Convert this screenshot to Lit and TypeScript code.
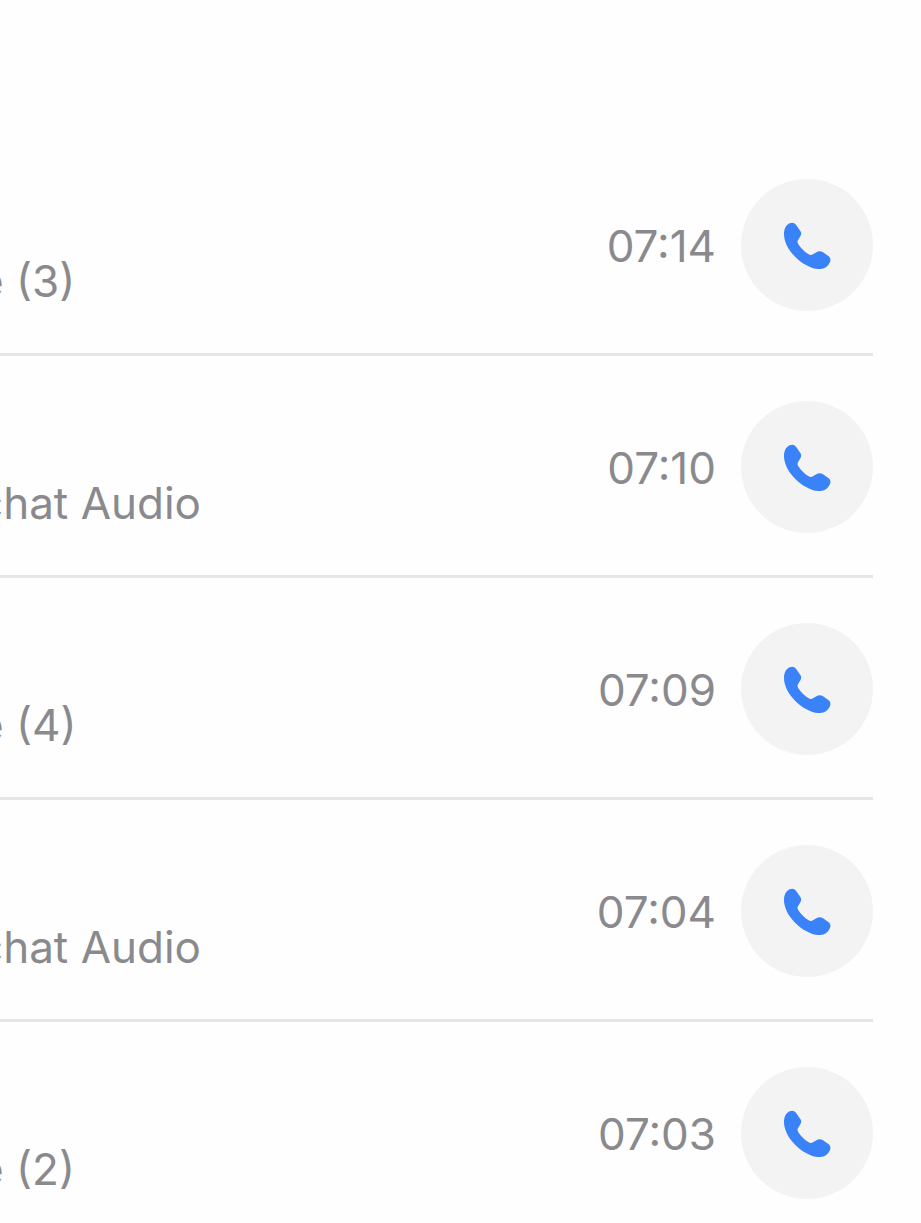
import { LitElement, html, css } from "lit";
import { customElement, property } from "lit/decorators.js";

interface Call {
  source: string;
  time: string;
}

const calls: Call[] = [
  { source: "e (3)", time: "07:14" },
  { source: "chat Audio", time: "07:10" },
  { source: "e (4)", time: "07:09" },
  { source: "chat Audio", time: "07:04" },
  { source: "e (2)", time: "07:03" },
];

@customElement("call-row")
class CallRow extends LitElement {
  @property({ attribute: false }) call!: Call;

  static styles = css`
    :host {
      display: block;
    }
    .row {
      display: flex;
      align-items: center;
      gap: 25px;
      padding: 45px 0 42px;
      border-bottom: 3px solid #e5e5ea;
      font-size: 44px;
      line-height: 56px;
      color: #8a8a8e;
    }
    .source {
      flex: 1;
      min-width: 0;
      margin-left: -22px;
      padding-top: 72px;
      white-space: nowrap;
    }
    .time {
      padding-top: 2px;
    }
    .dial {
      display: grid;
      place-items: center;
      width: 132px;
      height: 132px;
      padding: 0;
      border: 0;
      border-radius: 50%;
      background: #f3f3f3;
      color: #3a82f7;
      cursor: pointer;
    }
    .icon {
      display: block;
      width: 48px;
      height: 48px;
    }
  `;

  render() {
    const { source, time } = this.call;
    return html`
      <div class="row">
        <span class="source">${source}</span>
        <time class="time">${time}</time>
        <button class="dial" type="button" aria-label="Call">
          <svg class="icon" viewBox="39 33 144 144" aria-hidden="true">
            <path
              fill="currentColor"
              d="M42 72C42 57 48 45 59 40C67 36 73 38 78 44L91 63C95 69 94 74 91 79L84 91C82 95 82 98 85 103C93 115 105 127 116 133C120 136 124 136 129 133L139 127C146 123 152 123 159 127L175 138C182 143 183 150 179 158C173 171 161 178 145 177C122 176 97 161 76 141C55 120 42 95 42 72Z"
            />
          </svg>
        </button>
      </div>
    `;
  }
}

@customElement("app-root")
class AppRoot extends LitElement {
  static styles = css`
    :host {
      display: block;
      box-sizing: border-box;
      height: 100vh;
      overflow: hidden;
      padding: 134px 48px 0 0;
      background: #fefefe;
      font-family: Inter, "Liberation Sans", sans-serif;
    }
    .list {
      margin: 0;
      padding: 0;
      list-style: none;
    }
  `;

  render() {
    return html`
      <ul class="list">
        ${calls.map((call) => html`<li><call-row .call=${call}></call-row></li>`)}
      </ul>
    `;
  }
}
